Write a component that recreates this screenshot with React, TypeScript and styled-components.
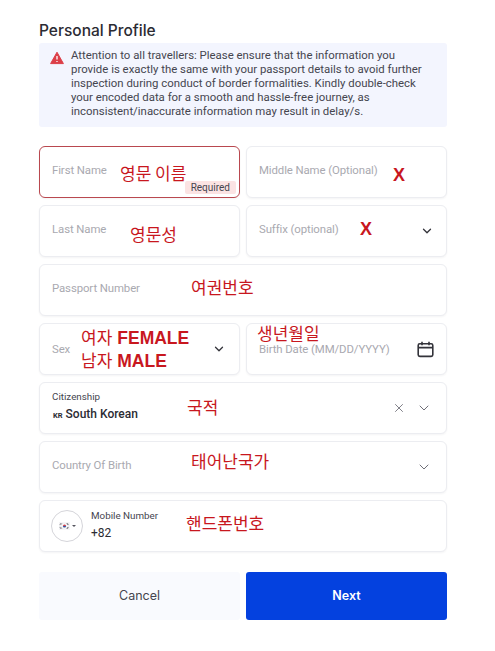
import React from 'react';
import styled, {createGlobalStyle} from 'styled-components';
import {ChevronDown, X} from 'lucide-react';

const Global = createGlobalStyle`
    html, body {
        margin: 0;
        background: #fff;
    }
    * {
        box-sizing: border-box;
    }
`;

const Page = styled.div`
    width: 495px;
    height: 651px;
    padding: 21px 48px 0 39px;
    font-family: Roboto, "Liberation Sans", sans-serif;
    overflow: hidden;
`;

const Title = styled.h1`
    margin: 0;
    height: 22px;
    font-family: Inter, "Liberation Sans", sans-serif;
    font-size: 15.5px;
    line-height: 19px;
    font-weight: 500;
    color: #2b2b33;
`;

const Notice = styled.div`
    display: flex;
    gap: 7px;
    height: 84px;
    padding: 5px 20px 0 11px;
    background: #f3f5fe;
    border-radius: 3px;
`;

const NoticeIcon = styled.svg`
    flex: none;
    width: 14px;
    height: 14px;
    margin-top: 3px;
`;

const NoticeText = styled.p`
    margin: 0;
    font-size: 11.4px;
    line-height: 14px;
    color: #45454f;
`;

const Form = styled.div`
    display: grid;
    grid-template-columns: 201px 201px;
    column-gap: 6px;
    row-gap: 7px;
    margin-top: 19px;
`;

const Field = styled.div<{$wide?: boolean; $error?: boolean}>`
    position: relative;
    grid-column: ${p => (p.$wide ? 'span 2' : 'auto')};
    height: 52px;
    padding: 0 12px;
    display: flex;
    align-items: center;
    justify-content: space-between;
    background: #fff;
    border: 1px solid ${p => (p.$error ? '#b9484f' : '#ecedf1')};
    border-radius: 6px;
    box-shadow: 0 1px 2px rgba(30, 30, 60, 0.05);
`;

const Placeholder = styled.span<{$up?: number}>`
    font-size: 11.4px;
    color: #a9a9b0;
    letter-spacing: -0.1px;
    margin-bottom: ${p => p.$up ?? 4}px;
`;

const Annotation = styled.span<{$left: number; $top: number; $bold?: boolean; $size?: number}>`
    position: absolute;
    left: ${p => p.$left}px;
    top: ${p => p.$top}px;
    font-family: ${p => (p.$bold ? '"Liberation Sans"' : '"Noto Sans CJK KR"')}, sans-serif;
    font-size: ${p => p.$size ?? 17}px;
    font-weight: ${p => (p.$bold ? 700 : 400)};
    line-height: 18px;
    white-space: nowrap;
    color: #c8171e;
`;

const Strong = styled.b`
    font-family: "Liberation Sans", sans-serif;
    font-weight: 700;
    font-size: 17.5px;
    margin-left: 5px;
`;

const Required = styled.span`
    position: absolute;
    right: 3px;
    bottom: 3px;
    height: 13px;
    padding: 0 6px;
    background: #fbe3e3;
    border-radius: 2px;
    font-size: 10px;
    line-height: 13px;
    color: #45454f;
`;

const Icons = styled.div<{$inset?: number}>`
    display: flex;
    align-items: center;
    gap: 10px;
    margin-right: ${p => p.$inset ?? 0}px;
    color: #6f6f78;
`;

const Stack = styled.div`
    display: flex;
    flex-direction: column;
    gap: 4px;
    margin-bottom: 2px;
`;

const SmallLabel = styled.span`
    font-size: 9.8px;
    line-height: 12px;
    color: #45454f;
`;

const Value = styled.span<{$light?: boolean}>`
    display: flex;
    align-items: baseline;
    gap: 3px;
    font-size: 12px;
    line-height: 14px;
    font-weight: ${p => (p.$light ? 400 : 500)};
    color: #2b2b33;
`;

const CountryCode = styled.span`
    font-size: 7.5px;
    font-weight: 700;
    margin-left: 1px;
`;

const Phone = styled.div`
    display: flex;
    align-items: center;
    gap: 8px;
    margin-left: -1px;
`;

const FlagButton = styled.div`
    width: 32px;
    height: 32px;
    border: 1px solid #d5d5da;
    border-radius: 50%;
    display: flex;
    align-items: center;
    justify-content: center;
    gap: 2px;
`;

const Caret = styled.span`
    width: 0;
    height: 0;
    border-left: 2px solid transparent;
    border-right: 2px solid transparent;
    border-top: 2.5px solid #55555e;
`;

const Buttons = styled.div`
    display: grid;
    grid-template-columns: 201px 201px;
    column-gap: 6px;
    margin-top: 20px;
`;

const Button = styled.button<{$primary?: boolean}>`
    height: 48px;
    padding: 0 0 2px;
    border: 0;
    border-radius: 3px;
    font-family: Inter, "Liberation Sans", sans-serif;
    font-size: 12.5px;
    font-weight: ${p => (p.$primary ? 600 : 400)};
    color: ${p => (p.$primary ? '#fff' : '#45454f')};
    background: ${p => (p.$primary ? '#0441df' : '#f9fafe')};
`;

const KoreaFlag: React.FC = () => (
    <svg width="11" height="8" viewBox="0 0 11 8">
        <rect width="11" height="8" fill="#f4f4f6" />
        <path d="M3.9 4a1.6 1.6 0 0 1 3.2 0z" fill="#d0404c" />
        <path d="M3.9 4a1.6 1.6 0 0 0 3.2 0z" fill="#34509a" />
        <path d="M.8 2.6l1.4-1.6M1.4 3.1l1.4-1.6M8.2 1l1.4 1.6M7.6 1.5l1.4 1.6M.8 5.4L2.2 7M1.4 4.9l1.4 1.6M8.2 7l1.4-1.6M7.6 6.5l1.4-1.6" stroke="#44444c" strokeWidth=".6" />
    </svg>
);

const CalendarIcon: React.FC = () => (
    <svg width="17" height="17" viewBox="0 0 17 17" fill="none" stroke="#33333a" strokeWidth="1.6">
        <rect x="1.2" y="2.8" width="14.6" height="12.6" rx="1.6" />
        <path d="M1.2 6.6h14.6M5 .8v3.4M12 .8v3.4" />
    </svg>
);

const App: React.FC = () => {
    return (
        <Page>
            <Global />
            <Title>Personal Profile</Title>
            <Notice>
                <NoticeIcon viewBox="0 0 14 14">
                    <path d="M7 1.2 13.4 12.6H.6z" fill="#dc3f48" stroke="#dc3f48" strokeLinejoin="round" />
                    <path d="M7 5v3.6M7 9.9v1.1" stroke="#fff" strokeWidth="1.3" />
                </NoticeIcon>
                <NoticeText>
                    Attention to all travellers: Please ensure that the information you provide is exactly the same
                    with your passport details to avoid further inspection during conduct of border formalities.
                    Kindly double-check your encoded data for a smooth and hassle-free journey, as
                    inconsistent/inaccurate information may result in delay/s.
                </NoticeText>
            </Notice>
            <Form>
                <Field $error>
                    <Placeholder>First Name</Placeholder>
                    <Annotation $left={80} $top={17}>영문 이름</Annotation>
                    <Required>Required</Required>
                </Field>
                <Field>
                    <Placeholder>Middle Name (Optional)</Placeholder>
                    <Annotation $left={146} $top={19} $bold $size={18}>X</Annotation>
                </Field>
                <Field>
                    <Placeholder>Last Name</Placeholder>
                    <Annotation $left={90} $top={19}>영문성</Annotation>
                </Field>
                <Field>
                    <Placeholder>Suffix (optional)</Placeholder>
                    <Annotation $left={113} $top={14} $bold $size={18}>X</Annotation>
                    <Icons><ChevronDown size={14} color="#33333a" strokeWidth={2.2} /></Icons>
                </Field>
                <Field $wide>
                    <Placeholder>Passport Number</Placeholder>
                    <Annotation $left={151} $top={13}>여권번호</Annotation>
                </Field>
                <Field>
                    <Placeholder $up={0}>Sex</Placeholder>
                    <Annotation $left={41} $top={4}>여자<Strong>FEMALE</Strong></Annotation>
                    <Annotation $left={41} $top={27}>남자<Strong>MALE</Strong></Annotation>
                    <Icons $inset={1}><ChevronDown size={14} color="#33333a" strokeWidth={2.2} /></Icons>
                </Field>
                <Field>
                    <Placeholder $up={0}>Birth Date (MM/DD/YYYY)</Placeholder>
                    <Annotation $left={10} $top={0}>생년월일</Annotation>
                    <CalendarIcon />
                </Field>
                <Field $wide>
                    <Stack>
                        <SmallLabel>Citizenship</SmallLabel>
                        <Value><CountryCode>KR</CountryCode>South Korean</Value>
                    </Stack>
                    <Annotation $left={147} $top={15}>국적</Annotation>
                    <Icons $inset={2}>
                        <X size={14} strokeWidth={1.5} />
                        <ChevronDown size={16} strokeWidth={1.5} />
                    </Icons>
                </Field>
                <Field $wide>
                    <Placeholder>Country Of Birth</Placeholder>
                    <Annotation $left={151} $top={10}>태어난국가</Annotation>
                    <Icons $inset={2}><ChevronDown size={16} strokeWidth={1.5} /></Icons>
                </Field>
                <Field $wide>
                    <Phone>
                        <FlagButton><KoreaFlag /><Caret /></FlagButton>
                        <Stack>
                            <SmallLabel>Mobile Number</SmallLabel>
                            <Value $light>+82</Value>
                        </Stack>
                    </Phone>
                    <Annotation $left={146} $top={13}>핸드폰번호</Annotation>
                </Field>
            </Form>
            <Buttons>
                <Button>Cancel</Button>
                <Button $primary>Next</Button>
            </Buttons>
        </Page>
    );
};

export default App;
